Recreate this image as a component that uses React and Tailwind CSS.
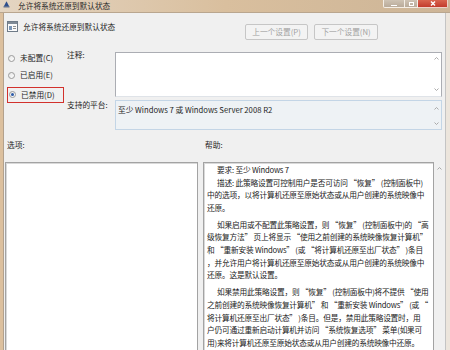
import React from 'react';

const font = { fontFamily: '"Noto Sans CJK SC", "Noto Sans", sans-serif' };

// tiny scroll chevron
const Chevron = ({ down }) => (
  <svg width="5" height="3" viewBox="0 0 5 3" className="block">
    <path d={down ? 'M0.5 0.5 L2.5 2.5 L4.5 0.5' : 'M0.5 2.5 L2.5 0.5 L4.5 2.5'} fill="none" stroke="#a2a2a2" strokeWidth="0.9" />
  </svg>
);

const Radio = ({ checked }) => (
  <span className="w-[7px] h-[7px] rounded-full border border-[#9a9a9a] bg-gradient-to-br from-[#e6e6e6] to-[#ffffff] flex items-center justify-center shrink-0">
    {checked && <span className="w-[3px] h-[3px] rounded-full bg-[#2c5aa8]" />}
  </span>
);

const helpText = [
  [
    { t: '要求: 至少 Windows 7', i: true },
    { t: '描述: 此策略设置可控制用户是否可访问 “恢复” (控制面板中)', i: true },
    { t: '中的选项，以将计算机还原至原始状态或从用户创建的系统映像中' },
    { t: '还原。' },
  ],
  [
    { t: '如果启用或不配置此策略设置，则 “恢复” (控制面板中)的 “高', i: true },
    { t: '级恢复方法” 页上将显示 “使用之前创建的系统映像恢复计算机”' },
    { t: '和 “重新安装 Windows” (或 “将计算机还原至出厂状态” )条目' },
    { t: '，并允许用户将计算机还原至原始状态或从用户创建的系统映像中' },
    { t: '还原。这是默认设置。' },
  ],
  [
    { t: '如果禁用此策略设置，则 “恢复” (控制面板中)将不提供 “使用', i: true },
    { t: '之前创建的系统映像恢复计算机” 和 “重新安装 Windows” (或 “' },
    { t: '将计算机还原至出厂状态” )条目。但是，禁用此策略设置时，用' },
    { t: '户仍可通过重新启动计算机并访问 “系统恢复选项” 菜单(如果可' },
    { t: '用)来将计算机还原至原始状态或从用户创建的系统映像中还原。' },
  ],
];

export default function App() {
  return (
    <div lang="zh-CN" style={font} className="w-[450px] h-[350px] overflow-hidden flex flex-col bg-[#f0f0f0] text-[7.7px] text-[#1e1e1e]">
      {/* title bar */}
      <div className="h-[13px] shrink-0 flex items-start bg-gradient-to-r from-[#e4d5c2] via-[#d9bf9e] to-[#cdb597] border-b border-[#b9a68f]">
        <svg width="7" height="7" viewBox="0 0 7 7" className="ml-[3px] mt-[1px]">
          <path d="M3.5 0.3 L6.5 6 L0.5 6 Z" fill="#2e4f8c" />
          <rect x="0.5" y="5.5" width="6" height="1.2" fill="#8a8f99" />
        </svg>
        <span className="ml-[8px] leading-[11px] text-[#2a2a2a]">允许将系统还原到默认状态</span>
        <div className="ml-auto mr-[2px] flex">
          <div className="w-[22px] h-[8px] border border-[#f4eee6] border-t-0 rounded-bl-[2px] bg-gradient-to-b from-[#cfc3b4] to-[#b9ab9a] flex items-end justify-center pb-[1px]">
            <span className="w-[6px] h-[1.5px] bg-white" />
          </div>
          <div className="w-[13px] h-[8px] border border-[#f4eee6] border-t-0 border-l-0 bg-gradient-to-b from-[#cfc3b4] to-[#b9ab9a] flex items-center justify-center">
            <span className="w-[5px] h-[4px] border border-white border-t-[1.5px]" />
          </div>
          <div className="w-[30px] h-[8px] border border-[#f0d0c8] border-t-0 border-l-0 rounded-br-[2px] bg-gradient-to-b from-[#d9644f] to-[#c23a2c] flex items-center justify-center">
            <svg width="6" height="5" viewBox="0 0 6 5">
              <path d="M1 0.5 L5 4.5 M5 0.5 L1 4.5" stroke="#fff" strokeWidth="1.4" />
            </svg>
          </div>
        </div>
      </div>

      <div className="flex flex-1 min-h-0">
        {/* left frame */}
        <div className="w-[4px] shrink-0 bg-[#dcc09e] border-r border-[#b3a18c]" />

        <div className="flex-1 min-w-0 flex flex-col">
          {/* header row */}
          <div className="h-[36px] shrink-0 flex items-start">
            <svg width="11" height="11" viewBox="0 0 11 11" className="ml-[3px] mt-[8px]">
              <rect x="0.5" y="0.5" width="10" height="10" fill="#fbfbfb" stroke="#6f7b88" />
              <rect x="1" y="1" width="9" height="2" fill="#7f8a96" />
              <rect x="2" y="5" width="3" height="4" fill="#7a96b8" />
              <rect x="6" y="5" width="3" height="1" fill="#909090" />
              <rect x="6" y="7" width="3" height="1" fill="#909090" />
            </svg>
            <span className="ml-[5px] mt-[8px] leading-[12px]">允许将系统还原到默认状态</span>
            <div className="ml-auto mr-[67px] mt-[11px] flex gap-[6px]">
              <div className="w-[63px] h-[16px] rounded-[2px] border border-[#c6c6c6] bg-[#f3f3f3] text-[#a2a2a2] flex items-center justify-center">上一个设置(P)</div>
              <div className="w-[64px] h-[16px] rounded-[2px] border border-[#c6c6c6] bg-[#f3f3f3] text-[#a2a2a2] flex items-center justify-center">下一个设置(N)</div>
            </div>
          </div>

          {/* state + comment/platform */}
          <div className="flex shrink-0">
            <div className="w-[63px] flex flex-col leading-[12px]">
              <div className="mt-[3px] h-[12px] flex items-center pl-[4px] gap-[5px]">
                <Radio />
                <span>未配置(C)</span>
              </div>
              <div className="mt-[5px] h-[12px] flex items-center pl-[4px] gap-[5px]">
                <Radio />
                <span>已启用(E)</span>
              </div>
              <div className="mt-[6px] ml-[3px] w-[57px] h-[16px] border-[1.5px] border-[#d2312c] flex items-center gap-[5px] pl-[1px] pb-[1px]">
                <Radio checked />
                <span>已禁用(D)</span>
              </div>
            </div>
            <div className="w-[48px] flex flex-col leading-[12px]">
              <span>注释:</span>
              <span className="mt-[38px]">支持的平台:</span>
            </div>
            <div className="w-[327px] flex flex-col">
              <div className="mt-[3px] h-[45px] bg-white border border-[#abadb3] border-b-[#dfe3e8] flex">
                <div className="ml-auto w-[10px] flex flex-col items-center justify-between pt-[4px] pb-[5px]">
                  <Chevron />
                  <Chevron down />
                </div>
              </div>
              <div className="mt-[3px] h-[30px] bg-[#eef2f5] border border-[#c3d5e6] flex">
                <span className="pl-[2px] pt-[3px] leading-[12px]">至少 Windows 7 或 Windows Server 2008 R2</span>
                <div className="ml-auto w-[10px] flex flex-col items-center justify-between pt-[6px] pb-[4px]">
                  <Chevron />
                  <Chevron down />
                </div>
              </div>
            </div>
          </div>

          {/* section labels */}
          <div className="mt-[9px] h-[12px] shrink-0 flex leading-[12px]">
            <span className="w-[201px] pl-[3px]">选项:</span>
            <span>帮助:</span>
          </div>

          {/* options + help */}
          <div className="mt-[11px] flex-1 min-h-0 overflow-hidden flex items-start">
            <div className="ml-[1px] w-[193px] h-[220px] shrink-0 bg-white border border-[#a3a3a3] shadow-[inset_1px_1px_0_#d9d9d9]" />
            <div className="ml-[5px] w-[231px] h-[220px] shrink-0 bg-white border border-[#a3a3a3] shadow-[inset_1px_1px_0_#d9d9d9] pl-[3px] pt-[1px] leading-[12.6px] text-[#222] tracking-[-0.2px]">
              {helpText.map((p, pi) => (
                <div key={pi} className={pi === 0 ? '' : 'mt-[4.5px]'}>
                  {p.map((l, li) => (
                    <div key={li} className={'whitespace-nowrap ' + (l.i ? 'pl-[10px]' : '')}>
                      {l.t}
                    </div>
                  ))}
                </div>
              ))}
            </div>
            <div className="w-[11px] shrink-0 flex justify-center pt-[5px]">
              <Chevron />
            </div>
          </div>
        </div>

        {/* right frame */}
        <div className="w-[5px] shrink-0 bg-[#ece5dc] border-l border-[#c4c4c4]" />
      </div>
    </div>
  );
}
